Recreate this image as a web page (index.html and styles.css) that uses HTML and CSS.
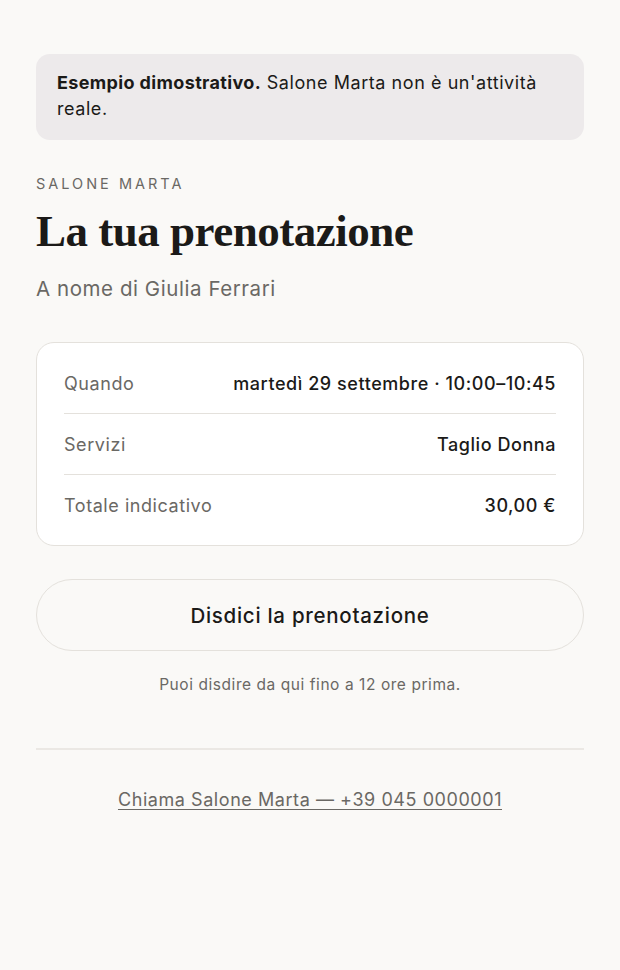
FILE: index.html
```html
<!DOCTYPE html>
<html lang="it">
<head>
    <meta charset="UTF-8">
    <meta name="viewport" content="width=device-width, initial-scale=1.0">
    <title>Salone Marta - La tua prenotazione</title>
    <link rel="stylesheet" href="styles.css">
</head>
<body>

    <div class="page">
        <!-- avviso demo -->
        <div class="notice">
            <strong>Esempio dimostrativo.</strong> Salone Marta non è un'attività reale.
        </div>

        <div class="eyebrow">SALONE MARTA</div>
        <h1>La tua prenotazione</h1>
        <p class="subtitle">A nome di Giulia Ferrari</p>

        <!-- riepilogo -->
        <div class="summary">
            <div class="row">
                <span class="label">Quando</span>
                <span class="value">martedì 29 settembre · 10:00–10:45</span>
            </div>
            <div class="row">
                <span class="label">Servizi</span>
                <span class="value">Taglio Donna</span>
            </div>
            <div class="row">
                <span class="label">Totale indicativo</span>
                <span class="value">30,00 €</span>
            </div>
        </div>

        <button class="cancel">Disdici la prenotazione</button>
        <p class="hint">Puoi disdire da qui fino a 12 ore prima.</p>

        <hr class="divider">

        <div class="footer">
            <a href="tel:+390450000001">Chiama Salone Marta — +39 045 0000001</a>
        </div>
    </div>

</body>
</html>
```

FILE: styles.css
```css
body {
    margin: 0;
    padding: 0;
    background-color: #faf9f7;
    font-family: 'Inter', 'Open Sans', sans-serif;
    letter-spacing: 0.035em;
    color: #1b1a18;
}

.page {
    padding: 54px 36px 40px;
}

.notice {
    background-color: #edeaeb;
    border-radius: 14px;
    padding: 16px 21px 18px;
    font-size: 18px;
    line-height: 26px;
    color: #1b1a18;
}

.notice strong {
    font-weight: 700;
    letter-spacing: 0.02em;
}

.eyebrow {
    margin-top: 35px;
    font-size: 14.5px;
    letter-spacing: 3px;
    color: #6a6864;
    line-height: 18px;
}

h1 {
    margin: 12px 0 0;
    font-family: 'Liberation Serif', 'DejaVu Serif', serif;
    font-size: 45px;
    font-weight: 700;
    line-height: 52px;
    letter-spacing: -0.5px;
    color: #1b1a18;
}

.subtitle {
    margin: 19px 0 0;
    font-size: 20.5px;
    line-height: 26px;
    color: #6a6864;
}

.summary {
    margin-top: 40px;
    background-color: #ffffff;
    border: 1px solid #e4e1dc;
    border-radius: 18px;
    padding: 10px 27px;
}

.row {
    display: flex;
    justify-content: space-between;
    align-items: center;
    height: 60px;
    font-size: 18px;
}

.row + .row {
    border-top: 1px solid #e4e1dc;
}

.label {
    color: #6a6864;
}

.value {
    color: #1b1a18;
    font-weight: 500;
}

.cancel {
    display: block;
    width: 100%;
    margin-top: 33px;
    height: 72px;
    border: 1px solid #e4e1dc;
    border-radius: 36px;
    background-color: #faf9f7;
    font-family: inherit;
    font-size: 20.5px;
    font-weight: 500;
    letter-spacing: 0.035em;
    color: #1b1a18;
    cursor: pointer;
}

.hint {
    margin: 24px 0 0;
    text-align: center;
    font-size: 15.5px;
    line-height: 20px;
    color: #6a6864;
}

.divider {
    margin: 53px 0 0;
    border: none;
    border-top: 2px solid #ebe8e4;
}

.footer {
    margin-top: 39px;
    text-align: center;
}

.footer a {
    font-size: 18px;
    color: #6a6864;
    text-decoration: underline;
    text-underline-offset: 3px;
}
```
